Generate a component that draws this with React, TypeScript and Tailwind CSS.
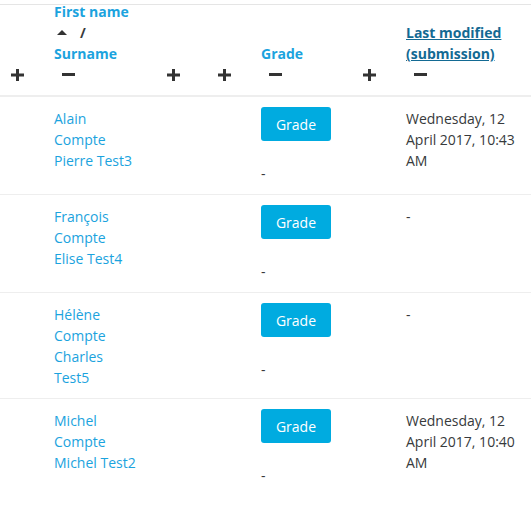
import React from 'react';

const rows = [
  { name: 'Alain Compte Pierre Test3', modified: 'Wednesday, 12 April 2017, 10:43 AM' },
  { name: 'François Compte Elise Test4', modified: '-' },
  { name: 'Hélène Compte Charles Test5', modified: '-' },
  { name: 'Michel Compte Michel Test2', modified: 'Wednesday, 12 April 2017, 10:40 AM' },
];

const cols = 'grid grid-cols-[42px_113px_51px_43px_102px_43px_137px]';

function Plus() {
  return (
    <svg width="13" height="12" viewBox="0 0 13 12" className="block">
      <rect x="5" y="0" width="3" height="12" fill="#333333" />
      <rect x="0" y="4.5" width="13" height="3" fill="#333333" />
    </svg>
  );
}

function Minus() {
  return (
    <svg width="13" height="3" viewBox="0 0 13 3" className="block">
      <rect x="0" y="0" width="13" height="3" fill="#333333" />
    </svg>
  );
}

// ligne des icônes en bas de chaque en-tête
function IconLine({ children, indent = false }: { children: React.ReactNode; indent?: boolean }) {
  return <div className={`h-[21px] flex items-center ${indent ? 'pl-[8px]' : ''}`}>{children}</div>;
}

export default function App() {
  return (
    <div className="w-[531px] h-[506px] overflow-hidden bg-white pt-[4px] text-[14px] leading-[21px] text-[#373a3c] font-['Open_Sans',sans-serif]">
      {/* En-tête */}
      <div className={`${cols} items-end border-t border-[#e5e5e5] border-b-2 border-b-[#eeeeee] pb-[10px]`}>
        <div className="pl-[11px]">
          <IconLine><Plus /></IconLine>
        </div>
        <div className="pl-[12px] -mt-[4px]">
          <div className="font-bold text-[#1ba3de]">First name</div>
          <div className="flex items-center">
            <svg width="10" height="5" viewBox="0 0 10 5" className="ml-[3px]">
              <polygon points="0,5 5,0 10,5" fill="#333333" />
            </svg>
            <span className="ml-[13px] font-bold">/</span>
          </div>
          <div className="font-bold text-[#1ba3de]">Surname</div>
          <IconLine indent><Minus /></IconLine>
        </div>
        <div className="pl-[12px]">
          <IconLine><Plus /></IconLine>
        </div>
        <div className="pl-[12px]">
          <IconLine><Plus /></IconLine>
        </div>
        <div className="pl-[12px]">
          <div className="font-bold text-[#1ba3de]">Grade</div>
          <IconLine indent><Minus /></IconLine>
        </div>
        <div className="pl-[12px]">
          <IconLine><Plus /></IconLine>
        </div>
        <div className="pl-[12px]">
          <div className="font-bold text-[#136a93] underline w-[113px]">Last modified (submission)</div>
          <IconLine indent><Minus /></IconLine>
        </div>
      </div>

      {rows.map((r, i) => (
        <div key={i} className={`${cols} ${i < rows.length - 1 ? 'border-b border-[#eeeeee]' : ''}`}>
          <div />
          <div className="pl-[12px] pt-[11px] pb-[10px]">
            <div className="w-[84px] text-[#1ba3de]">{r.name}</div>
          </div>
          <div />
          <div />
          <div className="pl-[12px] pt-[10px] pb-[10px]">
            <button className="w-[70px] h-[34px] rounded-[3px] bg-[#00abe0] text-white text-[14px]">Grade</button>
            <div className="mt-[22px]">-</div>
          </div>
          <div />
          <div className="pl-[12px] pt-[11px] pb-[10px]">
            <div className="w-[113px]">{r.modified}</div>
          </div>
        </div>
      ))}
    </div>
  );
}
